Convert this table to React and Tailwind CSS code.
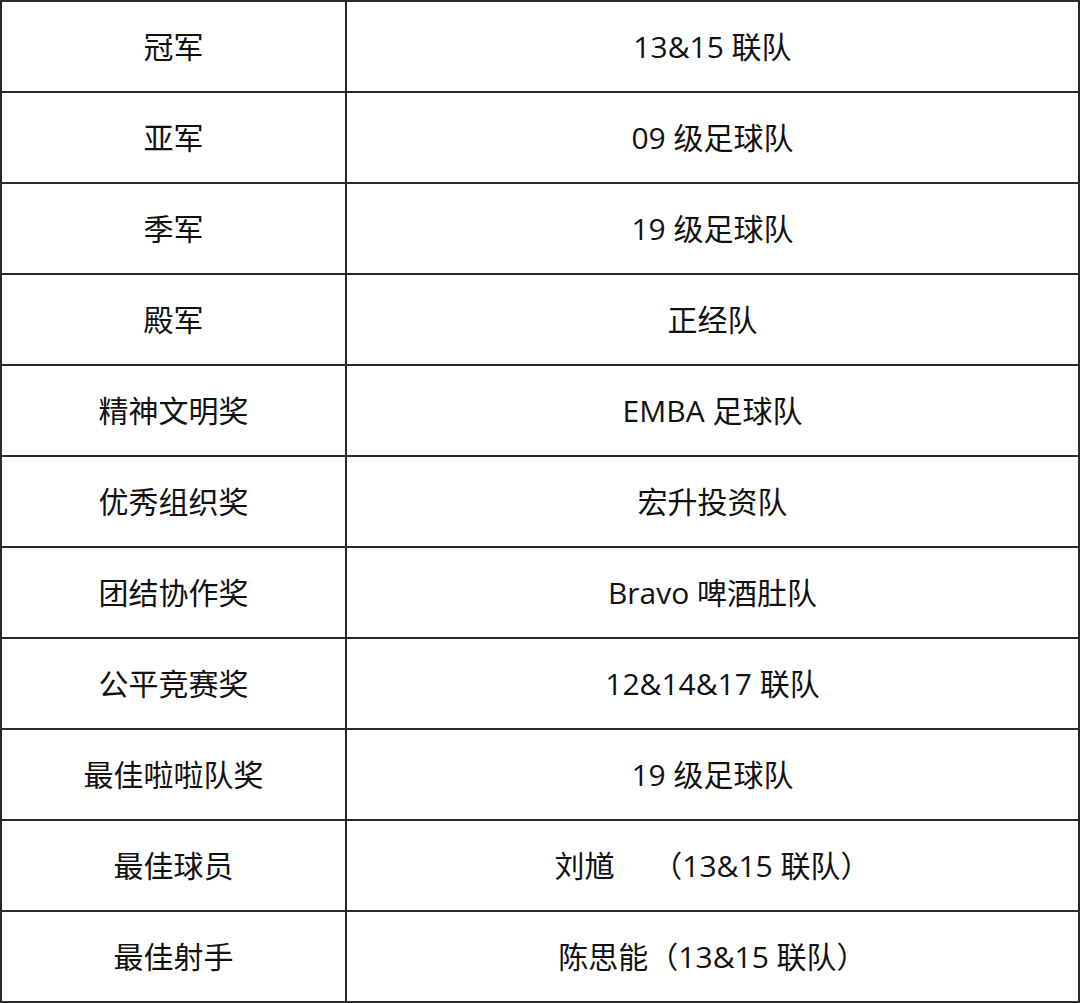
import React from "react";

const rows = [
  ["冠军", "13&15 联队"],
  ["亚军", "09 级足球队"],
  ["季军", "19 级足球队"],
  ["殿军", "正经队"],
  ["精神文明奖", "EMBA 足球队"],
  ["优秀组织奖", "宏升投资队"],
  ["团结协作奖", "Bravo 啤酒肚队"],
  ["公平竞赛奖", "12&14&17 联队"],
  ["最佳啦啦队奖", "19 级足球队"],
  ["最佳球员", "刘馗　 （13&15 联队）"],
  ["最佳射手", "陈思能（13&15 联队）"],
];

export default function App() {
  return (
    <div
      className="w-[1080px] h-[1003px] bg-white text-[#111] border-2 border-[#2a2a2a] flex flex-col"
      style={{ fontFamily: '"Open Sans", "Noto Sans CJK SC", sans-serif' }}
    >
      {rows.map(([award, team], i) => (
        <div
          key={i}
          className={`flex shrink-0 ${i === 0 ? "h-[89px]" : "h-[91px] border-t-2 border-[#2a2a2a]"}`}
        >
          <div className="w-[345px] shrink-0 border-r-2 border-[#2a2a2a] flex items-center justify-center text-[30px]">
            {award}
          </div>
          <div className="flex-1 flex items-center justify-center text-[30px] whitespace-pre">
            {team}
          </div>
        </div>
      ))}
    </div>
  );
}
